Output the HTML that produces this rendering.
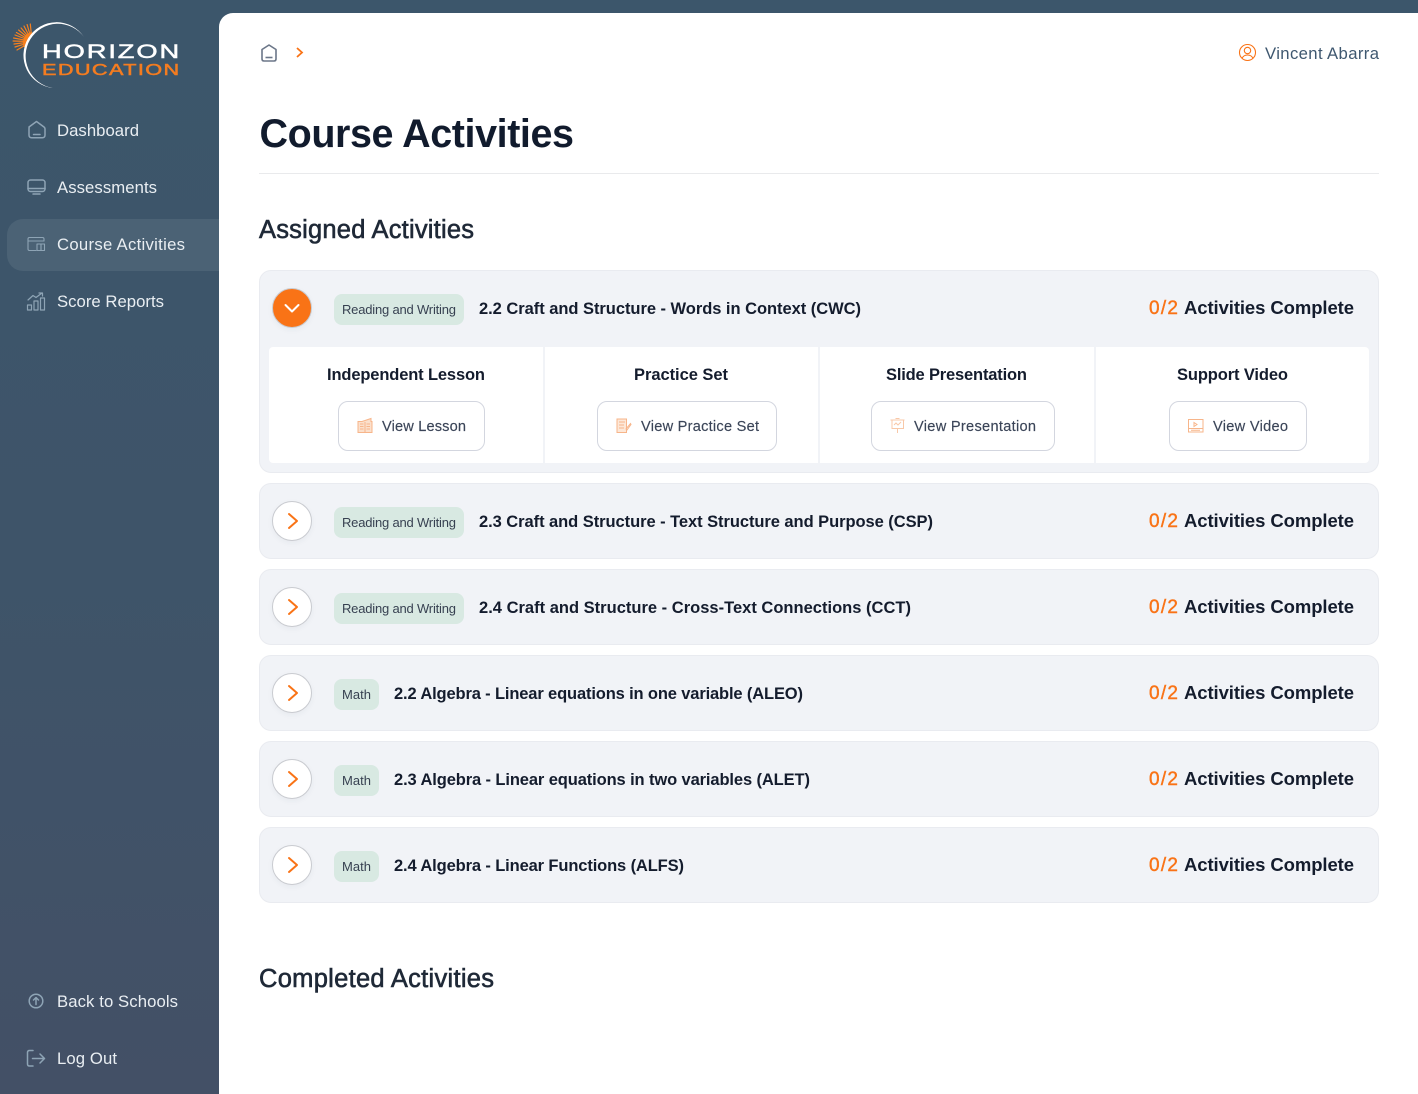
<!DOCTYPE html>
<html lang="en">
<head>
<meta charset="utf-8">
<title>Course Activities</title>
<style>
html,body{margin:0;padding:0}
body{width:1418px;height:1094px;position:relative;overflow:hidden;background:#3f5569;font-family:"Liberation Sans",sans-serif}
.bg{position:absolute;left:0;top:0;width:1418px;height:1094px;background:linear-gradient(180deg,#3c566b 0%,#3e5469 50%,#435066 100%)}
.main{position:absolute;left:219px;top:13px;width:1199px;height:1081px;background:#fff;border-top-left-radius:14px}
.nav{position:absolute;left:7px;top:219px;width:212px;height:52px;background:#4b6275;border-radius:16px 0 0 16px}
.rule{position:absolute;left:259px;top:173px;width:1120px;height:1px;background:#e9eaec}
.row{position:absolute;left:259px;width:1118px;background:#f1f3f7;border:1px solid #e9ebf0;border-radius:12px}
.inner{position:absolute;left:269px;top:347px;width:1100px;height:116px;background:#fff;border-radius:4px}
.sep{position:absolute;top:347px;width:2px;height:116px;background:#f1f3f7}
.btn{position:absolute;top:401px;height:48px;background:#fff;border:1px solid #d3d6df;border-radius:10px}
.chip{position:absolute;left:334px;height:31px;background:#d8e9e2;border-radius:8px}
.circle{position:absolute;left:272px;width:38px;height:38px;background:#fff;border:1px solid #c9cbd0;border-radius:50%;box-shadow:0 2px 6px rgba(40,50,70,.05)}
.circle.on{background:#f97316}
svg.layer{position:absolute;left:0;top:0}
text{white-space:pre}
.s{font-size:16.7px;fill:#e9eef2}
.h1{font-size:39.5px;font-weight:bold;fill:#111b2d}
.h2{font-size:25.5px;fill:#1f2937;stroke:#1f2937;stroke-width:.6px}
.t{font-size:16.5px;font-weight:bold;fill:#141c2d}
.c{font-size:13px;fill:#374151}
.r{font-size:18.5px;font-weight:bold;fill:#141c2d}
.o{font-size:19px;fill:#f97316;stroke:#f97316;stroke-width:.4px}
.b{font-size:14.6px;fill:#3b4558;stroke:#3b4558;stroke-width:.15px}
.u{font-size:16.7px;fill:#3f5870}
</style>
</head>
<body>
<div class="bg"></div>
<div class="main"></div>
<div class="nav"></div>
<div class="rule"></div>

<div class="row" style="top:270px;height:201px"></div>
<div class="row" style="top:483px;height:74px"></div>
<div class="row" style="top:569px;height:74px"></div>
<div class="row" style="top:655px;height:74px"></div>
<div class="row" style="top:741px;height:74px"></div>
<div class="row" style="top:827px;height:74px"></div>

<div class="inner"></div>
<div class="sep" style="left:543px"></div>
<div class="sep" style="left:818px"></div>
<div class="sep" style="left:1094px"></div>

<div class="btn" style="left:338px;width:145px"></div>
<div class="btn" style="left:597px;width:178px"></div>
<div class="btn" style="left:871px;width:182px"></div>
<div class="btn" style="left:1169px;width:136px"></div>

<div class="circle on" style="top:288px"></div>
<div class="circle" style="top:501px"></div>
<div class="circle" style="top:587px"></div>
<div class="circle" style="top:673px"></div>
<div class="circle" style="top:759px"></div>
<div class="circle" style="top:845px"></div>

<div class="chip" style="top:294px;width:130px"></div>
<div class="chip" style="top:507px;width:130px"></div>
<div class="chip" style="top:593px;width:130px"></div>
<div class="chip" style="top:679px;width:45px"></div>
<div class="chip" style="top:765px;width:45px"></div>
<div class="chip" style="top:851px;width:45px"></div>

<svg class="layer" width="1418" height="1094" viewBox="0 0 1418 1094" xmlns="http://www.w3.org/2000/svg">
  <!-- logo -->
  <g stroke="#f7801e" stroke-width="1.200" stroke-linecap="round">
    <path d="M31.400 35L30.300 24M30.200 35.200L27.100 24.600M29 35.700L24 26M28 36.300L21.100 28M27 37L18.600 30M26.300 38L16.400 32.500M25.700 39L15 35M25.200 40.200L13.600 38M25 41.400L13.100 41M25 42.600L14 44M25.200 43.800L15 47M25.700 45L17 50"/>
  </g>
  <path d="M31 32Q21 36 23.500 47L27 47Q26 38 33 33Z" fill="#f7801e"/>
  <path d="M84 37A33 33 0 1 0 53 88A32.300 32.300 0 1 1 84 37Z" fill="#fff"/>
  <text transform="translate(42 58) scale(1.4 1)" x="0" y="0" font-size="19.500" fill="#fff" stroke="#fff" stroke-width=".5" textLength="98" lengthAdjust="spacing">HORIZON</text>
  <text transform="translate(42 75) scale(1.4 1)" x="0" y="0" font-size="15.500" fill="#f47c20" stroke="#f47c20" stroke-width=".5" textLength="98" lengthAdjust="spacing">EDUCATION</text>

  <!-- sidebar icons -->
  <g fill="none" stroke="#8ea4b5" stroke-width="1.500" stroke-linejoin="round" stroke-linecap="round">
    <path d="M29 127L36.500 121.500L44 127C44.800 127.600 45 128 45 129V135C45 136.700 44 137.700 42.300 137.700H31.700C30 137.700 29 136.700 29 135V129C29 128 29.200 127.600 29 127Z"/>
    <path d="M33.500 134.500H40"/>
    <rect x="28" y="180" width="17" height="11.500" rx="2.500"/>
    <path d="M28 188.500H45M33 194H40"/>
    <g stroke-width="1.100">
      <path d="M44 241V239C44 238 43.500 237.500 42.500 237.500H29.500C28.500 237.500 28 238 28 239V249C28 250 28.500 250.500 29.500 250.500H36"/>
      <path d="M28 241H44"/>
      <rect x="37" y="244" width="4" height="6.500"/>
      <rect x="41" y="244" width="3.500" height="6.500"/>
    </g>
    <g stroke-width="1.200">
      <rect x="27.500" y="305" width="4" height="5"/>
      <rect x="34" y="301" width="4" height="9"/>
      <rect x="40.500" y="298" width="4" height="12"/>
      <path d="M28 300L33 295.500L36 297.500L42 293M39 293H42.500V296"/>
    </g>
    <circle cx="36" cy="1001" r="6.800"/>
    <path d="M36 1004.500V998M33.500 1000L36 997.500L38.500 1000"/>
    <path d="M33 1050.500H29.500C28.300 1050.500 27.500 1051.300 27.500 1052.500V1064C27.500 1065.200 28.300 1066 29.500 1066H33"/>
    <path d="M32.500 1058.500H44.500M40 1054L44.500 1058.500L40 1063"/>
  </g>

  <!-- sidebar text -->
  <text class="s" x="57" y="136" textLength="82">Dashboard</text>
  <text class="s" x="57" y="193" textLength="100">Assessments</text>
  <text class="s" x="57" y="250" textLength="128">Course Activities</text>
  <text class="s" x="57" y="307" textLength="107">Score Reports</text>
  <text class="s" x="57" y="1007" textLength="121">Back to Schools</text>
  <text class="s" x="57" y="1064" textLength="60">Log Out</text>

  <!-- breadcrumb -->
  <path d="M262 49.500L269 45L276 49.500V59C276 60.300 275.300 61 274 61H264C262.700 61 262 60.300 262 59Z" fill="none" stroke="#6b7688" stroke-width="1.600" stroke-linejoin="round"/>
  <path d="M265.500 57.500H272.500" stroke="#6b7688" stroke-width="1.600"/>
  <path d="M297 48L302 52.500L297 57" fill="none" stroke="#f97316" stroke-width="1.800"/>

  <!-- user -->
  <g fill="none" stroke="#f97316" stroke-width="1.100">
    <circle cx="1247.500" cy="52.500" r="8"/>
    <circle cx="1247.500" cy="50.500" r="3.200"/>
    <path d="M1242 58.500C1243 56 1245 55 1247.500 55C1250 55 1252 56 1253 58.500"/>
  </g>
  <text class="u" x="1265" y="59" textLength="114">Vincent Abarra</text>

  <!-- headings -->
  <text class="h1" x="259.500" y="147" textLength="314.500">Course Activities</text>
  <text class="h2" x="259" y="238" textLength="215">Assigned Activities</text>
  <text class="h2" x="259" y="987" textLength="235">Completed Activities</text>

  <!-- chevrons -->
  <g fill="none" stroke="#fff" stroke-width="2" stroke-linecap="round" stroke-linejoin="round">
    <path d="M285.500 305L292 311.500L298.500 305"/>
  </g>
  <g fill="none" stroke="#f97316" stroke-width="2" stroke-linecap="round" stroke-linejoin="round">
    <path d="M289 514L297 521L289 528"/>
    <path d="M289 600L297 607L289 614"/>
    <path d="M289 686L297 693L289 700"/>
    <path d="M289 772L297 779L289 786"/>
    <path d="M289 858L297 865L289 872"/>
  </g>

  <!-- chips -->
  <text class="c" x="342" y="314" textLength="114">Reading and Writing</text>
  <text class="c" x="342" y="527" textLength="114">Reading and Writing</text>
  <text class="c" x="342" y="613" textLength="114">Reading and Writing</text>
  <text class="c" x="342" y="699" textLength="29">Math</text>
  <text class="c" x="342" y="785" textLength="29">Math</text>
  <text class="c" x="342" y="871" textLength="29">Math</text>

  <!-- titles -->
  <text class="t" x="479" y="314" textLength="382">2.2 Craft and Structure - Words in Context (CWC)</text>
  <text class="t" x="479" y="527" textLength="454">2.3 Craft and Structure - Text Structure and Purpose (CSP)</text>
  <text class="t" x="479" y="613" textLength="432">2.4 Craft and Structure - Cross-Text Connections (CCT)</text>
  <text class="t" x="394" y="699" textLength="409">2.2 Algebra - Linear equations in one variable (ALEO)</text>
  <text class="t" x="394" y="785" textLength="416">2.3 Algebra - Linear equations in two variables (ALET)</text>
  <text class="t" x="394" y="871" textLength="290">2.4 Algebra - Linear Functions (ALFS)</text>

  <!-- progress -->
  <text class="o" x="1149" y="314" textLength="29">0/2</text><text class="r" x="1184" y="314" textLength="170">Activities Complete</text>
  <text class="o" x="1149" y="527" textLength="29">0/2</text><text class="r" x="1184" y="527" textLength="170">Activities Complete</text>
  <text class="o" x="1149" y="613" textLength="29">0/2</text><text class="r" x="1184" y="613" textLength="170">Activities Complete</text>
  <text class="o" x="1149" y="699" textLength="29">0/2</text><text class="r" x="1184" y="699" textLength="170">Activities Complete</text>
  <text class="o" x="1149" y="785" textLength="29">0/2</text><text class="r" x="1184" y="785" textLength="170">Activities Complete</text>
  <text class="o" x="1149" y="871" textLength="29">0/2</text><text class="r" x="1184" y="871" textLength="170">Activities Complete</text>

  <!-- column heads -->
  <text class="t" x="327" y="380" textLength="158">Independent Lesson</text>
  <text class="t" x="634" y="380" textLength="94">Practice Set</text>
  <text class="t" x="886" y="380" textLength="141">Slide Presentation</text>
  <text class="t" x="1177" y="380" textLength="111">Support Video</text>

  <!-- button icons -->
  <g fill="none" stroke="#f7b58a" stroke-width="1">
    <path d="M358 421.500H362L365 420.500L371 418.500V421.500H372V432.500H358Z" fill="#fbe0cc"/>
    <path d="M365 422V432M360 424H363.500M360 426.500H363.500M360 429H363.500M366.500 424H370M366.500 426.500H370M366.500 429H370"/>
    <path d="M617 419H626.500V432.500H617Z" fill="#fde8d8"/>
    <path d="M619 422H625M619 425H624M619 428H624M626 429L630.500 423.500L631 424.500L627 430Z"/>
    <path d="M890.500 420H904.500M892 420V428.500H903.500V420M897.500 428.500V433M895.500 418.500H899.500" stroke="#f8c8a8"/>
    <path d="M894 425L896 423L898 425L901 422" stroke="#f8c8a8"/>
    <rect x="1188.500" y="419.500" width="14.500" height="12.500"/>
    <path d="M1188.500 428.500H1203M1191 430.300H1200M1194 422.500L1197 424.500L1194 426.500Z"/>
  </g>

  <!-- button text -->
  <text class="b" x="382" y="431" textLength="84">View Lesson</text>
  <text class="b" x="641" y="431" textLength="118">View Practice Set</text>
  <text class="b" x="914" y="431" textLength="122">View Presentation</text>
  <text class="b" x="1213" y="431" textLength="75">View Video</text>
</svg>
</body>
</html>
